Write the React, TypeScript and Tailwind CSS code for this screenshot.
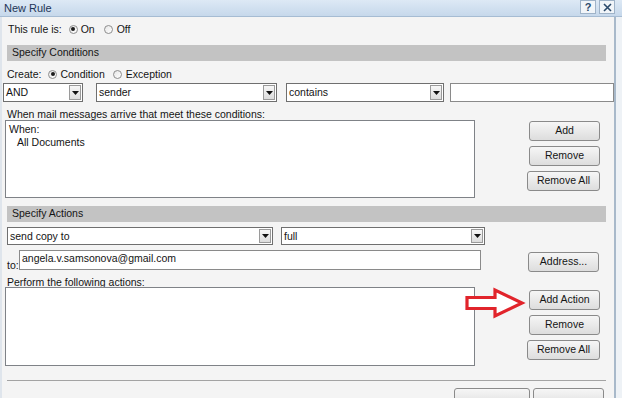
import type { ReactNode } from "react";

function Radio({ checked }: { checked?: boolean }) {
  return (
    <span className="inline-flex h-[9px] w-[9px] shrink-0 items-center justify-center rounded-full border border-[#8d8d8d] bg-gradient-to-br from-[#e6e6e6] to-white">
      {checked && <span className="h-[4px] w-[4px] rounded-full bg-[#1c1c1c]" />}
    </span>
  );
}

function Select({ value, className }: { value: string; className: string }) {
  return (
    <div className={`flex items-stretch border border-[#6f6f6f] bg-white ${className}`}>
      <span className="flex-1 truncate pl-[2px] leading-[16px]">{value}</span>
      <span className="m-[1px] flex w-[12px] items-center justify-center border border-[#9a9a9a] bg-gradient-to-b from-[#f7f7f7] to-[#dcdcdc]">
        <svg width="7" height="4" viewBox="0 0 7 4">
          <path d="M0 0h7L3.5 4z" fill="#111" />
        </svg>
      </span>
    </div>
  );
}

function Button({ children, className = "w-[71px]" }: { children: ReactNode; className?: string }) {
  return (
    <div
      className={`flex h-[20px] items-center justify-center rounded-[3px] border border-[#8a8a8a] bg-gradient-to-b from-[#f6f6f6] to-[#dddddd] text-[#151515] ${className}`}
    >
      {children}
    </div>
  );
}

export default function App() {
  return (
    <div className="flex h-[398px] w-[622px] flex-col overflow-hidden bg-[#f4f4f4] font-['Liberation_Sans',Arial,sans-serif] text-[10.5px] text-[#141414]">
      <div className="flex h-[17px] shrink-0 items-start justify-between border-b border-[#a6bcd3] bg-gradient-to-b from-[#dde9f5] to-[#c6d8eb]">
        <span className="pl-[4px] pt-[2px] text-[11px] leading-[13px] text-[#1d3557]">New Rule</span>
        <div className="flex gap-[3px] pr-[7px]">
          <span className="flex h-[14px] w-[16px] items-center justify-center border border-[#9fb3c8] bg-[#f1f5f9] text-[11px] font-bold leading-none text-[#2b4a6b]">
            ?
          </span>
          <span className="flex h-[14px] w-[16px] items-center justify-center border border-[#9fb3c8] bg-[#f1f5f9] text-[#2b4a6b]">
            <svg width="9" height="9" viewBox="0 0 9 9">
              <path d="M1 1l7 7M8 1L1 8" stroke="#2b4a6b" strokeWidth="1.6" />
            </svg>
          </span>
        </div>
      </div>

      <div className="flex flex-1">
        <div className="w-[2px] shrink-0 bg-[#dfe5ec]" />

        <div className="flex w-[612px] shrink-0 flex-col">
          <div className="flex h-[28px] items-start gap-[4px] pl-[6px] pt-[6px] leading-[12px]">
            <span>This rule is:</span>
            <span className="flex items-center gap-[3px] pl-[3px]">
              <Radio checked />
              <span>On</span>
            </span>
            <span className="flex items-center gap-[4px] pl-[5px]">
              <Radio />
              <span>Off</span>
            </span>
          </div>

          <div className="ml-[5px] flex h-[16px] w-[599px] items-center bg-[#c3c3c3] pl-[5px]">Specify Conditions</div>

          <div className="flex h-[22px] items-start gap-[5px] pl-[5px] pt-[7px] leading-[12px]">
            <span>Create:</span>
            <span className="flex items-center gap-[3px] pl-[2px]">
              <Radio checked />
              <span>Condition</span>
            </span>
            <span className="flex items-center gap-[4px] pl-[3px]">
              <Radio />
              <span>Exception</span>
            </span>
          </div>

          <div className="flex h-[19px] items-stretch pl-[1px]">
            <Select value="AND" className="w-[80px]" />
            <Select value="sender" className="ml-[13px] w-[181px]" />
            <Select value="contains" className="ml-[9px] w-[158px]" />
            <div className="ml-[6px] w-[164px] border border-[#8a8a8a] bg-white" />
          </div>

          <div className="h-[18px] pl-[5px] pt-[6px] leading-[12px]">When mail messages arrive that meet these conditions:</div>

          <div className="flex h-[78px]">
            <div className="ml-[3px] w-[470px] border border-[#7f8287] bg-white pl-[3px] pt-[2px] leading-[13px]">
              <div>When:</div>
              <div className="pl-[8px]">All Documents</div>
            </div>
            <div className="ml-[52px] flex w-[73px] flex-col items-end gap-[5px] pt-[1px]">
              <Button>Add</Button>
              <Button>Remove</Button>
              <Button className="w-[73px]">Remove All</Button>
            </div>
          </div>

          <div className="mt-[8px] ml-[5px] flex h-[16px] w-[599px] items-center bg-[#c3c3c3] pl-[5px]">Specify Actions</div>

          <div className="mt-[5px] flex h-[18px] items-stretch pl-[5px]">
            <Select value="send copy to" className="w-[266px]" />
            <Select value="full" className="ml-[8px] w-[204px]" />
          </div>

          <div className="mt-[5px] flex h-[21px] items-end pl-[5px]">
            <span className="w-[12px] leading-[12px]">to:</span>
            <div className="h-[20px] w-[462px] self-start border border-[#8a8a8a] bg-white pl-[2px] pt-[1px] leading-[13px]">
              angela.v.samsonova@gmail.com
            </div>
            <div className="mb-[-1px] ml-[47px]">
              <Button>Address...</Button>
            </div>
          </div>

          <div className="h-[16px] pl-[5px] pt-[5px] leading-[12px]">Perform the following actions:</div>

          <div className="relative flex h-[79px]">
            <div className="ml-[3px] w-[470px] border border-[#7f8287] bg-white" />
            <div className="ml-[52px] flex w-[73px] flex-col items-end gap-[5px] pt-[3px]">
              <Button>Add Action</Button>
              <Button>Remove</Button>
              <Button className="w-[73px]">Remove All</Button>
            </div>
            <svg className="absolute left-[462px] top-[0px]" width="62" height="32" viewBox="0 0 62 32">
              <path
                d="M3 10.5h28V3l27 13-27 13v-7.5H3z"
                fill="white"
                stroke="#e1242b"
                strokeWidth="3.2"
                strokeLinejoin="miter"
              />
            </svg>
          </div>

          <div className="mt-[14px] ml-[5px] h-[2px] w-[599px] border-t border-[#a3a3a3] border-b-white" />

          <div className="mt-[6px] flex gap-[3px] pl-[452px]">
            <div className="h-[20px] w-[76px] rounded-[3px] border border-[#8a8a8a] bg-gradient-to-b from-[#f6f6f6] to-[#dddddd]" />
            <div className="h-[20px] w-[71px] rounded-[3px] border border-[#8a8a8a] bg-gradient-to-b from-[#f6f6f6] to-[#dddddd]" />
          </div>
        </div>

        <div className="w-[2px] shrink-0 bg-[#a8b9ca]" />
        <div className="flex-1 bg-[#eef2f6]" />
      </div>
    </div>
  );
}
